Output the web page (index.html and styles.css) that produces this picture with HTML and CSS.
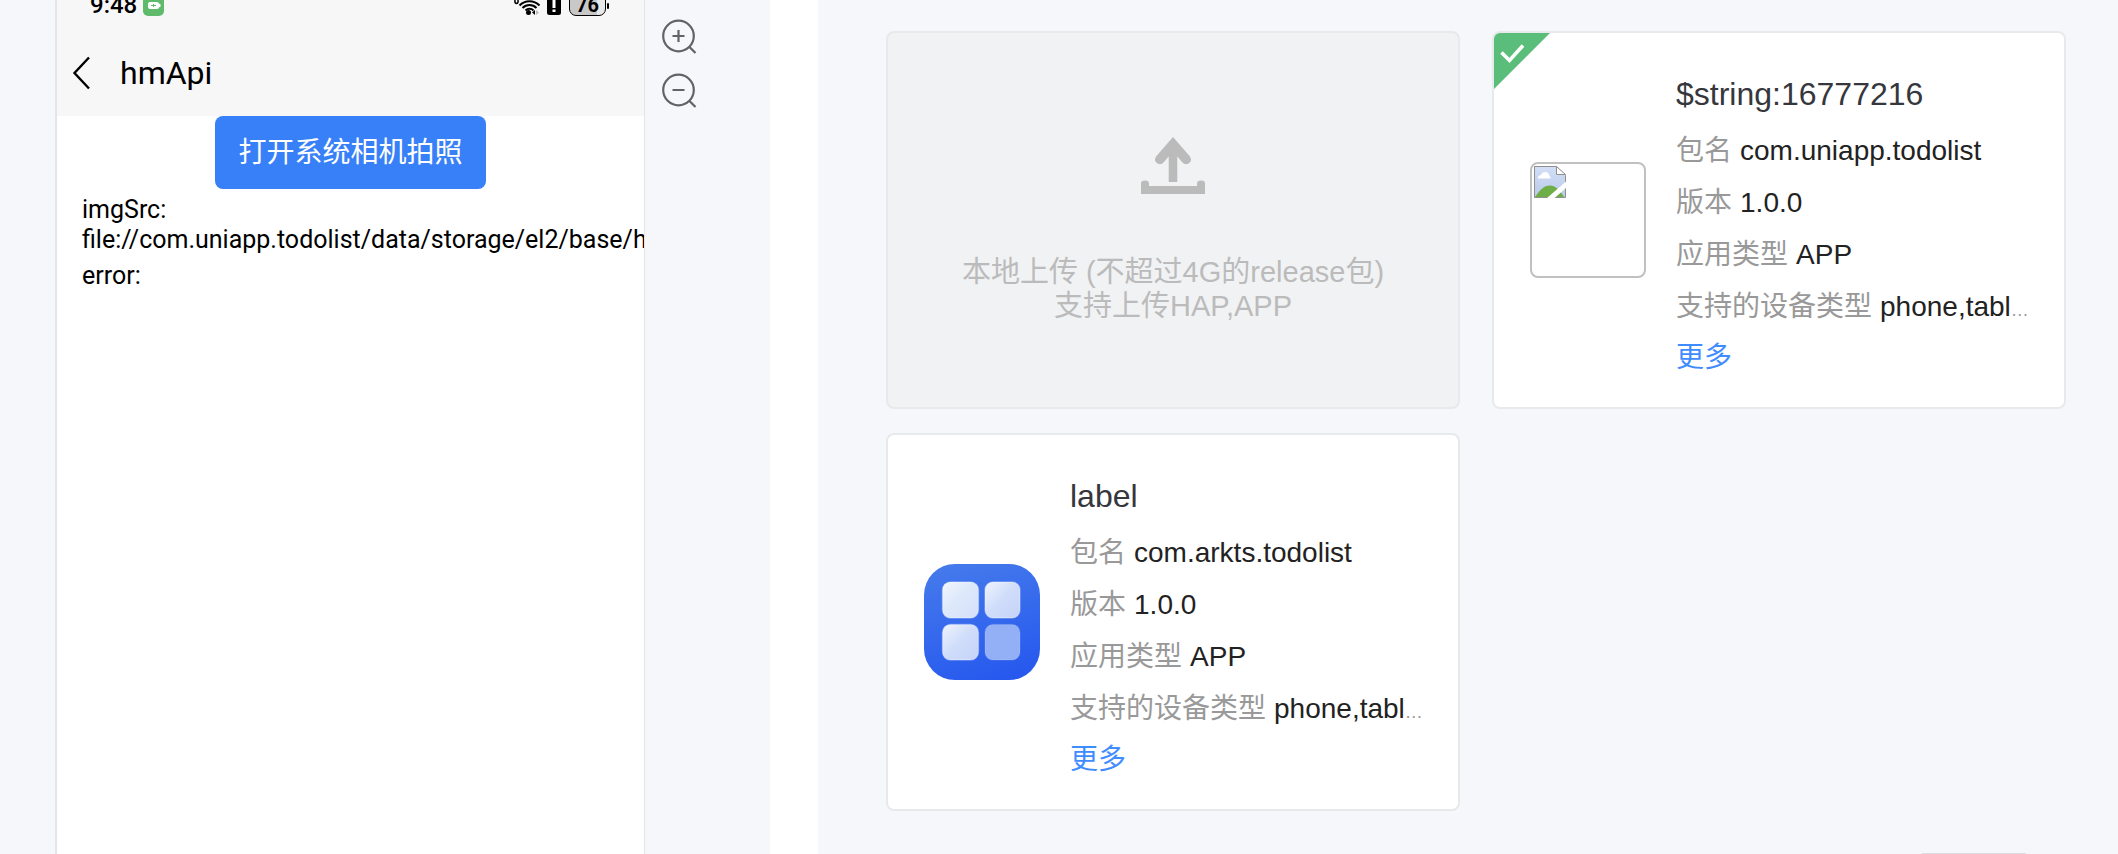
FILE: index.html
```html
<!DOCTYPE html>
<html lang="zh-CN">
<head>
<meta charset="utf-8">
<title>hmApi</title>
<link rel="stylesheet" href="styles.css">
</head>
<body>
<main class="workspace">
  <section class="device-panel">
    <div class="phone">
      <header class="phone-top">
        <div class="status">
          <span class="clock">9:48</span>
          <svg class="badge" width="21" height="21" viewBox="0 0 21 21"><rect width="21" height="21" rx="5" fill="#5fba6c"/><rect x="5" y="7" width="11" height="7" rx="2" fill="#fff"/><path d="M16 8.500l1.500 .8v2.400l-1.500 .8z" fill="#fff"/><path d="M8 10.500h5M10.500 9v3" stroke="#5fba6c" stroke-width="1"/></svg>
          <svg class="signal" width="48" height="22" viewBox="0 0 48 22"><g fill="none" stroke="#000" stroke-width="2"><ellipse cx="2.500" cy="7" rx="1.600" ry="2.500" stroke-width="1.500"/><path d="M5.500 11.500a14 14 0 0 1 20 0M8.500 14a9.800 9.800 0 0 1 14 0M11.500 16.500a5.600 5.600 0 0 1 8 0"/></g><circle cx="14.500" cy="18.500" r="2.500"/><path d="M18 18.500l3-2.500v5z"/><path d="M22 16l3 2.500-3 2.500z" fill="#bbb"/><rect x="33" y="1" width="14" height="20" rx="2.500"/><path d="M40 6v8M40 15.500v2.500" stroke="#fff" stroke-width="3"/></svg>
          <span class="battery">76</span>
        </div>
        <div class="nav">
          <button class="back" aria-label="返回"><svg width="18" height="34" viewBox="0 0 18 34"><path d="M17 1.500L2.500 17L17 32.500" fill="none" stroke="#000" stroke-width="2.400"/></svg></button>
          <h1 class="nav-title">hmApi</h1>
        </div>
      </header>
      <button class="camera">打开系统相机拍照</button>
      <div class="output">
        <p class="line">imgSrc:<br>file://com.uniapp.todolist/data/storage/el2/base/h</p>
        <p class="line">error:</p>
      </div>
    </div>
    <div class="zoom-tools">
      <button class="tool" aria-label="放大"><svg width="36" height="36" viewBox="0 0 36 36"><g fill="none" stroke="#626366" stroke-width="2.200"><circle cx="17.500" cy="17" r="15.300"/><path d="M28.500 28l6 6M17.500 11v12M11.500 17h12"/></g></svg></button>
      <button class="tool" aria-label="缩小"><svg width="36" height="36" viewBox="0 0 36 36"><g fill="none" stroke="#626366" stroke-width="2.200"><circle cx="17.500" cy="17" r="15.300"/><path d="M28.500 28l6 6M11.500 17h12"/></g></svg></button>
    </div>
  </section>

  <section class="apps-panel">
    <div class="cards">
      <button class="card upload">
        <svg width="64" height="58" viewBox="0 0 64 58" fill="#bbb"><path d="M32 0L49 19.500Q51.500 24 47.500 26.500Q44 28.500 41 25L36.300 19.500V45H27.700V19.500L23 25Q20 28.500 16.500 26.500Q12.500 24 15 19.500Z"/><path d="M0 57V44Q0 41 4 41Q8 41 8 44.500V47.500H56V44.500Q56 41 60 41Q64 41 64 44V57Z" transform="translate(0 9) scale(1 .84)"/></svg>
        <span class="upload-text">本地上传 (不超过4G的release包)<br>支持上传HAP,APP</span>
      </button>

      <article class="card app">
        <svg class="corner" width="56" height="56" viewBox="0 0 56 56"><path d="M0 0H56L0 56Z" fill="#5bbd7a"/><path d="M7.500 19.500l8 8L29 12.500" fill="none" stroke="#fff" stroke-width="3.600"/></svg>
        <div class="thumb missing">
          <svg width="32" height="32" viewBox="0 0 32 32"><defs><linearGradient id="sky" x1="0" y1="0" x2="0" y2="1"><stop offset="0" stop-color="#d3dff7"/><stop offset="1" stop-color="#b9c9ea"/></linearGradient></defs><path d="M.5.500H22.500L31.500 9.500V31.500H.500Z" fill="url(#sky)" stroke="#8f8f8f"/><path d="M1 31C7 22 11 19.500 16 19.500S26 24 30 31Z" fill="#6fad47"/><path d="M4 12.500q-.5-3 3-3.500Q8 6 11 6q4 0 4.500 4 1.500.5 1 2.500z" fill="#fff"/><path d="M22.500.500V8.500H31.500Z" fill="#fff" stroke="#8f8f8f"/><path d="M12.500 32.500H20L33 21V14.500Z" fill="#fff"/></svg>
        </div>
        <div class="info">
          <h2 class="name">$string:16777216</h2>
          <p class="row"><span class="key">包名</span> <span class="value">com.uniapp.todolist</span></p>
          <p class="row"><span class="key">版本</span> <span class="value">1.0.0</span></p>
          <p class="row"><span class="key">应用类型</span> <span class="value">APP</span></p>
          <p class="row"><span class="key">支持的设备类型</span> <span class="value">phone,tablet,2in1</span></p>
          <a class="more" href="#">更多</a>
        </div>
      </article>

      <article class="card app">
        <svg class="thumb" viewBox="0 0 116 116"><defs><linearGradient id="tile" x1="0.300" y1="0" x2="0.600" y2="1"><stop offset="0" stop-color="#4479ec"/><stop offset="1" stop-color="#2759ee"/></linearGradient><linearGradient id="pane" x1="0" y1="0" x2="1" y2="1"><stop offset="0" stop-color="#f3f7fe"/><stop offset=".4" stop-color="#dfe9fb"/><stop offset="1" stop-color="#d3e0fa"/></linearGradient><linearGradient id="pane2" x1="0" y1="0" x2="1" y2="1"><stop offset="0" stop-color="#eef3fe"/><stop offset=".5" stop-color="#cfdcfa"/><stop offset="1" stop-color="#c5d3f8"/></linearGradient></defs><rect width="116" height="116" rx="31" fill="url(#tile)"/><g stroke="#fff" stroke-opacity=".3" stroke-width="1.500"><rect x="18.500" y="18" width="36" height="36" rx="8" fill="url(#pane)"/><rect x="61" y="18" width="35" height="36" rx="8" fill="url(#pane2)"/><rect x="18.500" y="60.500" width="36" height="35.500" rx="8" fill="url(#pane2)"/><rect x="61" y="60.500" width="35" height="35.500" rx="8" fill="#93aff6" stroke-opacity=".1"/></g></svg>
        <div class="info">
          <h2 class="name">label</h2>
          <p class="row"><span class="key">包名</span> <span class="value">com.arkts.todolist</span></p>
          <p class="row"><span class="key">版本</span> <span class="value">1.0.0</span></p>
          <p class="row"><span class="key">应用类型</span> <span class="value">APP</span></p>
          <p class="row"><span class="key">支持的设备类型</span> <span class="value">phone,tablet,2in1</span></p>
          <a class="more" href="#">更多</a>
        </div>
      </article>
    </div>
    <div class="footer-edge"></div>
  </section>
</main>
</body>
</html>
```
FILE: styles.css
```css
* { box-sizing: border-box; }

body {
  margin: 0;
  background: #fff;
  font-family: "Liberation Sans", "Noto Sans CJK SC", sans-serif;
}

h1, h2, p { margin: 0; font-weight: 400; }

button {
  margin: 0;
  padding: 0;
  border: 0;
  background: none;
  font: inherit;
  cursor: pointer;
}

svg { display: block; flex: none; }

.workspace {
  display: grid;
  grid-template-columns: 770fr 1300fr;
  gap: 48px;
  min-height: 100vh;
}

/* Device preview */
.device-panel {
  display: flex;
  gap: 16px;
  min-width: 0;
  padding: 0 73px 0 55px;
  background: #f5f7fb;
}

.phone {
  flex: 1;
  min-width: 0;
  overflow: hidden;
  display: flex;
  flex-direction: column;
  align-items: center;
  border-left: 2px solid #e4e5e8;
  border-right: 1px solid #e4e5e8;
  background: #fff;
  color: #000;
  font-family: Roboto, "Noto Sans CJK SC", sans-serif;
}

.phone-top {
  align-self: stretch;
  height: 116px;
  background: #f7f7f7;
}

.status {
  display: flex;
  align-items: flex-end;
  height: 16px;
  padding: 0 38px 0 33px;
}

.clock {
  font-size: 24px;
  line-height: 22px;
  font-weight: 500;
}

.badge { margin-left: 6px; }

.signal { margin-left: auto; }

.battery {
  position: relative;
  width: 37px;
  height: 24px;
  margin-left: 7px;
  border: 1px solid #000;
  border-radius: 7px;
  background: linear-gradient(90deg, #c8c8c8 76%, #e8e8e8 76%);
  font-size: 20px;
  line-height: 24px;
  font-weight: 700;
  text-align: center;
}

.battery::after {
  content: "";
  position: absolute;
  right: -4px;
  top: 10px;
  width: 2px;
  height: 6px;
  border-radius: 1px;
  background: #000;
}

.nav {
  display: flex;
  align-items: center;
  gap: 30px;
  padding: 40px 15px 0;
}

.nav-title { font-size: 32px; line-height: 34px; }

.camera {
  padding: 0 23px;
  border-radius: 8px;
  background: #3880f7;
  color: #fff;
  font-size: 28px;
  line-height: 73px;
  white-space: nowrap;
}

.output {
  align-self: stretch;
  display: grid;
  gap: 6px;
  padding: 6px 0 0 25px;
}

.line {
  font-size: 25px;
  line-height: 30px;
  white-space: nowrap;
}

.zoom-tools {
  display: flex;
  flex-direction: column;
  gap: 18px;
  padding-top: 19px;
}

/* App packages */
.apps-panel {
  min-width: 0;
  padding: 31px 52px 0 68px;
  background: #f5f7fb;
}

.cards {
  display: grid;
  grid-template-columns: 1fr 1fr;
  gap: 24px 32px;
}

.card {
  position: relative;
  min-width: 0;
  border: 2px solid #e8e9ea;
  border-radius: 8px;
  overflow: hidden;
  background: #fff;
}

.upload {
  display: flex;
  flex-direction: column;
  align-items: center;
  gap: 60px;
  padding: 104px 0 84px;
  background: #f1f2f4;
  color: #bbb;
}

.upload-text { font-size: 29px; line-height: 34px; }

.app {
  display: flex;
  align-items: center;
  gap: 30px;
  padding: 27px 34px 27px 36px;
}

.corner {
  position: absolute;
  left: 0;
  top: 0;
}

.thumb {
  flex: none;
  width: 116px;
  height: 116px;
}

.missing {
  padding: 2px;
  border: 2px solid #c0c0c0;
  border-radius: 8px;
}

.info { flex: 1; min-width: 0; }

.name {
  padding: 2px 0;
  color: #36373c;
  font-size: 32px;
  line-height: 64px;
}

.row {
  overflow: hidden;
  text-overflow: ellipsis;
  white-space: nowrap;
  color: #999;
  font-size: 18px;
  line-height: 52px;
}

.key, .value, .more { font-size: 28px; }

.key, .value { line-height: 28px; }

.key { margin-right: 3px; color: #999; }

.value { color: #222; }

.more {
  display: block;
  color: #3f8cff;
  line-height: 44px;
  text-decoration: none;
}

.footer-edge {
  width: 104px;
  height: 1px;
  margin: 42px 40px 0 auto;
  background: #dcdde0;
}
```
